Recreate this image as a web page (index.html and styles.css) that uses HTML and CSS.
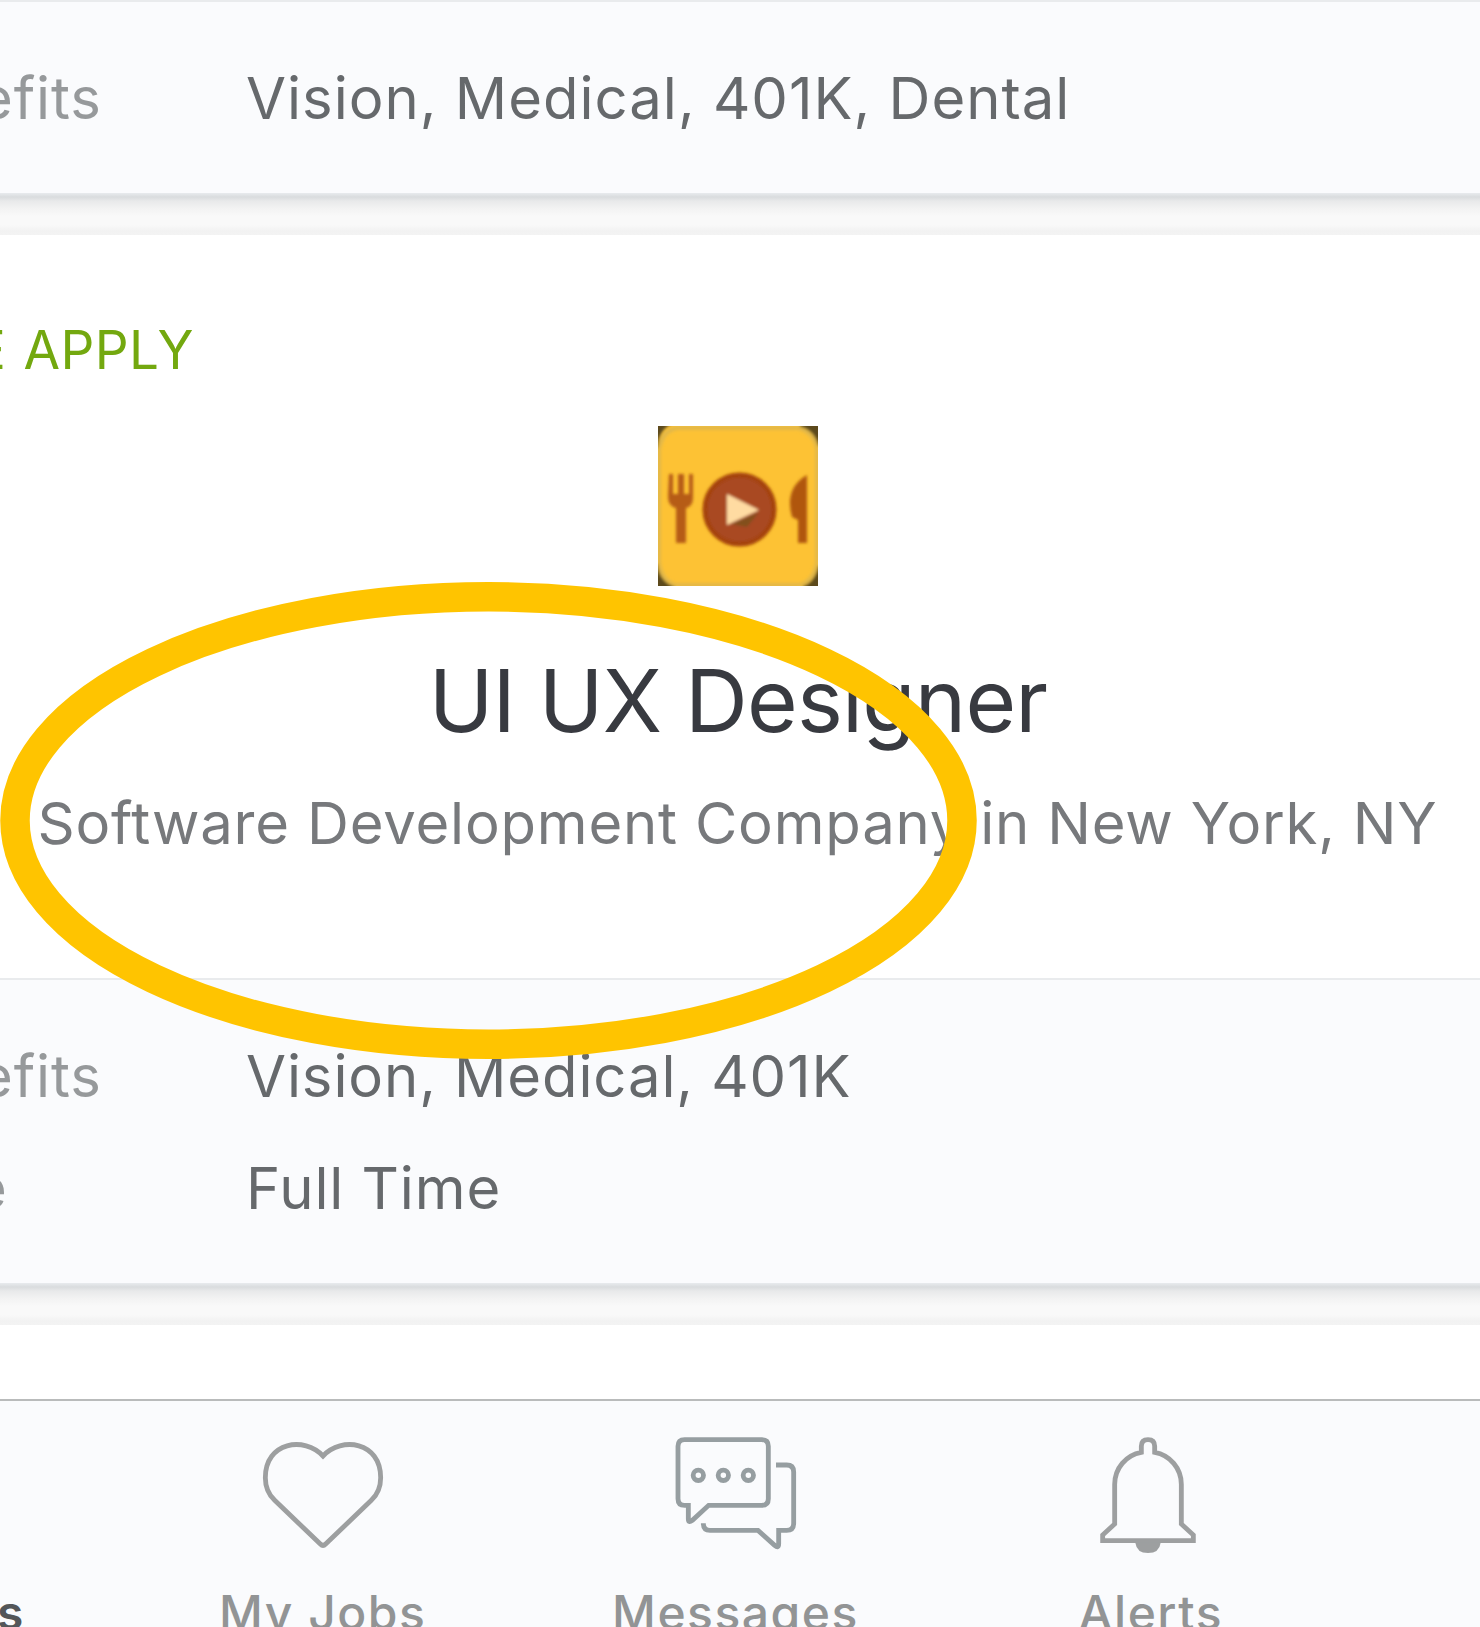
FILE: index.html
```html
<!DOCTYPE html>
<html lang="en">
<head>
<meta charset="utf-8">
<title>Jobs</title>
<link rel="stylesheet" href="styles.css">
</head>
<body>
<main class="screen">
  <section class="details details-first">
    <div class="row"><span class="label">efits</span><span class="value value-long">Vision, Medical, 401K, Dental</span></div>
  </section>
  <div class="gap"></div>
  <article class="card">
    <div class="badge">E APPLY</div>
    <svg class="logo" viewBox="0 0 160 160">
      <defs><filter id="soft"><feGaussianBlur stdDeviation="1.7"/></filter></defs>
      <rect width="160" height="160" fill="#fdc234"/>
      <g filter="url(#soft)">
        <path d="M-4-4H18Q1 2 0 20L-4 26ZM142-4H164V20H159Q157 5 142 1ZM-4 138H0Q2 155 17 160V164H-4ZM164 140H160Q157 156 145 160V164H164Z" fill="#5b4a1c"/>
        <path d="M1 24Q4 4 20 2H140Q156 6 159 23V136Q156 155 142 159H17Q3 154 1 136Z" fill="none" stroke="#e2b849" stroke-width="4"/>
        <path d="M11 48H15V68H20V48H26V68H31V48H35V72Q35 80 28 82V117H18V82Q10 80 10 71Z" fill="#b65b14"/>
        <circle cx="81.500" cy="83.500" r="34.500" fill="#a94824" stroke="#a44207" stroke-width="5"/>
        <path d="M73 98L101 86L89 101Z" fill="#82501f"/>
        <path d="M69 68L101 84L69 99Z" fill="#ffdba2"/>
        <path d="M149 49V117H140V94L134 91Q126 62 149 49Z" fill="#b0560d"/>
      </g>
    </svg>
    <h1 class="title">UI UX Designer</h1>
    <p class="company">Software Development Company in New York, NY</p>
    <svg class="ring" viewBox="0 0 978 478"><ellipse cx="488.500" cy="238.500" rx="473.500" ry="223.700"/></svg>
  </article>
  <section class="details details-second">
    <div class="row"><span class="label">efits</span><span class="value">Vision, Medical, 401K</span></div>
    <div class="row"><span class="label label-type">e</span><span class="value">Full Time</span></div>
  </section>
  <div class="gap"></div>
  <div class="next-card"></div>
  <nav class="tabs">
    <a class="tab tab-active"><span class="tab-label">s</span></a>
    <a class="tab">
      <svg class="icon" viewBox="188 165 360 360"><path d="M368 228C312 168 195 185 195 293Q195 334 223 361L360 492Q368 500 376 492L513 361Q541 334 541 293C541 185 424 168 368 228Z"/></svg>
      <span class="tab-label">My Jobs</span>
    </a>
    <a class="tab">
      <svg class="icon icon-messages" viewBox="225 165 360 360">
        <path d="M254 179H485Q505 179 505 199V356Q505 376 485 376H326L277 421Q265 430 265 417V376H254Q234 376 234 356V199Q234 179 254 179Z"/>
        <path d="M528 255H560Q581 255 581 276V430Q581 451 560 451H536V492Q536 506 524 496L474 451H330Q310 451 310 430"/>
        <circle cx="295" cy="286" r="15.500"/><circle cx="370" cy="286" r="15.500"/><circle cx="445" cy="286" r="15.500"/>
      </svg>
      <span class="tab-label">Messages</span>
    </a>
    <a class="tab">
      <svg class="icon" viewBox="114 165 360 360">
        <path d="M274 217V199Q274 179 294 179Q314 179 314 199V217C360 225 394 265 394 313V432L430 465V482H158V465L194 432V313C194 265 228 225 274 217Z"/>
        <path class="solid" d="M256 488H332Q328 519 294 519Q260 519 256 488Z"/>
      </svg>
      <span class="tab-label tab-label-alerts">Alerts</span>
    </a>
  </nav>
</main>
</body>
</html>
```

FILE: styles.css
```css
* { box-sizing: border-box; }
body {
  margin: 0;
  overflow: hidden;
  background: #fff;
  font-family: Inter, "Liberation Sans", sans-serif;
}
.screen {
  display: flex;
  flex-direction: column;
  width: 1480px;
  height: 1627px;
  overflow: hidden;
}
.details {
  flex: none;
  background: #fafbfd;
  border-top: 2px solid #e9ebed;
  font-size: 58px;
  line-height: 112px;
  letter-spacing: 0.9px;
}
.details-first { height: 193px; padding-top: 40px; }
.details-second { height: 305px; padding-top: 40px; }
.row { display: flex; height: 112px; white-space: nowrap; }
.label { width: 246px; flex: none; color: #96999b; text-indent: -21px; }
.label-type { text-indent: -27px; }
.value { color: #66696c; }
.value-long { letter-spacing: 1px; }
.gap {
  flex: none;
  height: 42px;
  background: linear-gradient(#e8ebee 0, #d9dcde 4px, #e8e9ea 8px, #f2f2f2 15px, #f9f9f9 23px, #f9f9f9 32px, #f2f2f2 38px, #f3f3f3 42px);
}
.card {
  position: relative;
  flex: none;
  display: flex;
  flex-direction: column;
  align-items: center;
  height: 743px;
  padding-top: 83px;
}
.badge {
  align-self: flex-start;
  margin-left: -26px;
  height: 64px;
  line-height: 64px;
  font-size: 53px;
  letter-spacing: 0.4px;
  word-spacing: 2px;
  color: #73a80f;
  white-space: nowrap;
}
.logo { flex: none; width: 160px; height: 160px; margin: 44px 5px 0 0; }
.title {
  margin: 63px 4px 0 0;
  height: 104px;
  line-height: 104px;
  font-size: 87px;
  font-weight: 400;
  letter-spacing: -0.8px;
  color: #383a40;
  white-space: nowrap;
}
.company {
  margin: 34px 5px 0 0;
  height: 72px;
  line-height: 72px;
  font-size: 58px;
  letter-spacing: 0.8px;
  color: #77797c;
  white-space: nowrap;
}
.ring { position: absolute; left: 0; top: 347px; width: 978px; height: 478px; z-index: 1; }
.ring ellipse { fill: none; stroke: #ffc400; stroke-width: 29.5px; }
.next-card { flex: none; height: 74px; background: #fff; }
.tabs {
  flex: none;
  display: flex;
  height: 228px;
  border-top: 2px solid #b9bbbb;
  background: #fafbfd;
}
.tab {
  flex: 0 0 412.8px;
  display: flex;
  flex-direction: column;
  align-items: center;
  padding-top: 34px;
}
.tab-active { flex-basis: 116.3px; align-items: flex-start; padding-top: 154px; color: #535659; }
.icon { width: 120px; height: 120px; flex: none; overflow: visible; fill: none; stroke: #9d9fa0; stroke-width: 14.5px; }
.icon-messages { stroke: #969ea1; }
.icon .solid { fill: #9d9fa0; stroke: none; }
.tab-label {
  margin-top: 28px;
  height: 60px;
  line-height: 60px;
  font-size: 48px;
  font-weight: 500;
  letter-spacing: 1.5px;
  color: #929495;
  white-space: nowrap;
}
.tab-active .tab-label { color: #535659; font-weight: 600; margin-left: -3px; }
.tab-label-alerts { padding-left: 5px; }
```
